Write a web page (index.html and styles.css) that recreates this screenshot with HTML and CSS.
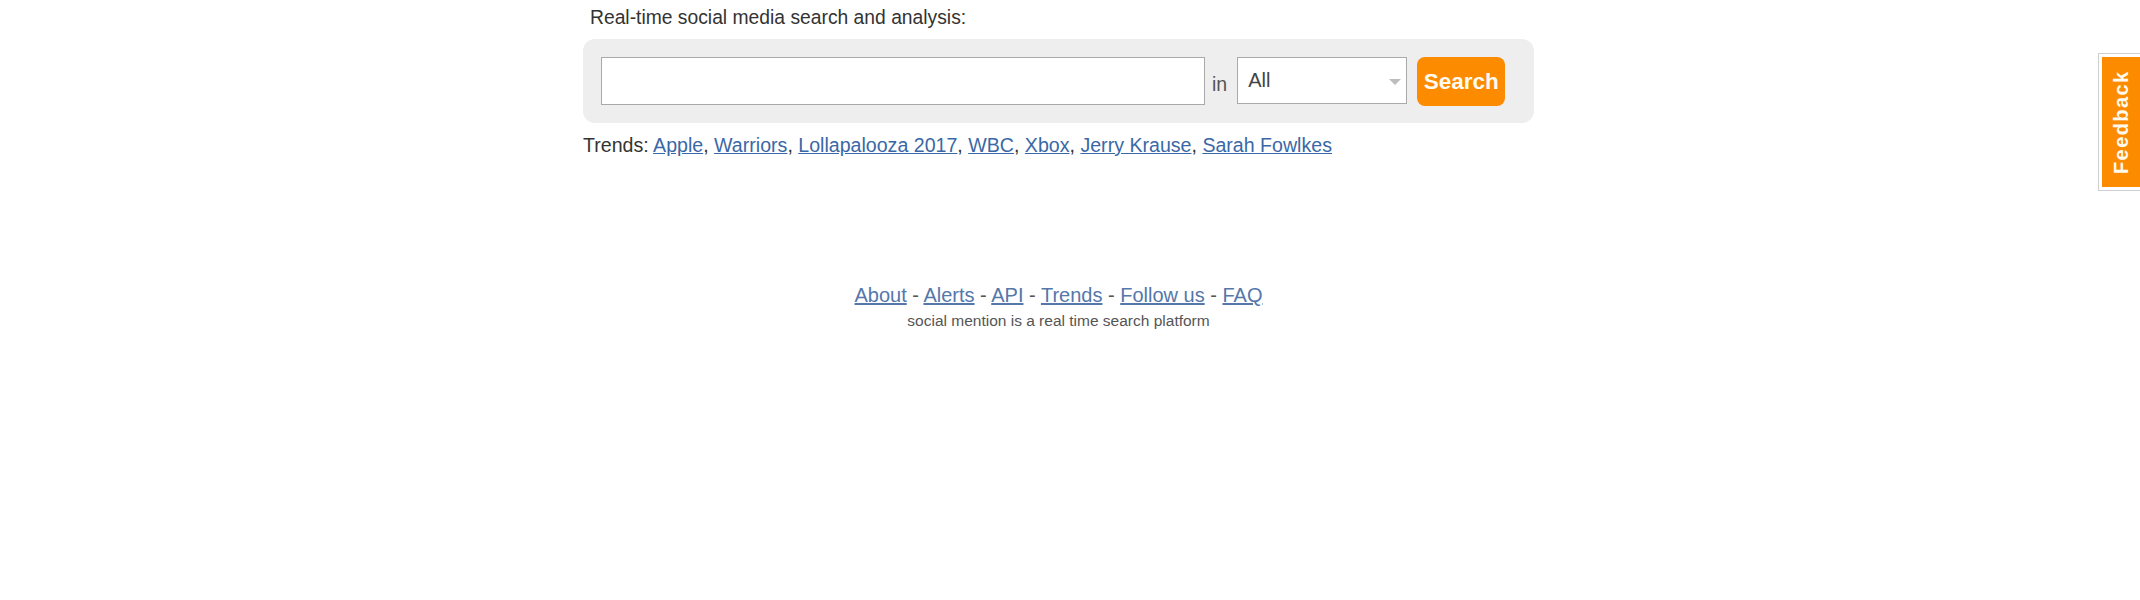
FILE: index.html
```html
<!doctype html>
<html lang="en">
 <head>
  <meta charset="UTF-8">
  <meta name="viewport" content="width=device-width, initial-scale=1.0">
  <title>Social Mention - Real Time Search</title>
  <link rel="stylesheet" href="styles.css">
 </head>
 <body>
  <div class="page">
   <div class="search">
    <p class="tagline">Real-time social media search and analysis:</p>
    <form class="searchbox" action="#">
     <input type="text" class="query" id="q">
     <span class="in">in</span>
     <div class="source">
      <span>All</span>
      <svg class="arrow" width="12" height="6" viewBox="0 0 12 6"><path d="M0 0h12L6 6z" fill="#bdbdbd"/></svg>
     </div>
     <button type="submit" class="go">Search</button>
    </form>
    <p class="trends">Trends: <a href="#">Apple</a>, <a href="#">Warriors</a>, <a href="#">Lollapalooza 2017</a>, <a href="#">WBC</a>, <a href="#">Xbox</a>, <a href="#">Jerry Krause</a>, <a href="#">Sarah Fowlkes</a></p>
   </div>

   <div class="footer">
    <p class="links"><a href="#">About</a> - <a href="#">Alerts</a> - <a href="#">API</a> - <a href="#">Trends</a> - <a href="#">Follow us</a> - <a href="#">FAQ</a></p>
    <p class="about">social mention is a real time search platform</p>
   </div>
  </div>

  <a class="feedback" href="#"><span>Feedback</span></a>
 </body>
</html>
```

FILE: styles.css
```css
body {
  margin: 0;
  background: #fff;
  font-family: "Liberation Sans", Arial, sans-serif;
  color: #333;
}
a {
  color: #3a68a6;
}
.page {
  padding-right: 23px; /* the original page had a scrollbar */
}
.search {
  width: 951px;
  margin: 0 auto;
}
.tagline {
  margin: 0;
  padding: 7px 0 0 7px;
  font-size: 19.3px;
  line-height: 22px;
}
.searchbox {
  display: flex;
  align-items: flex-start;
  margin: 10px 0 0;
  padding: 18px 18px 17px;
  background: #eeeeee;
  border-radius: 12px;
}
.query {
  box-sizing: border-box;
  width: 604px;
  height: 48px;
  margin: 0;
  padding: 0 8px;
  border: 1px solid #a9a9a9;
  background: #fff;
  font-family: inherit;
  font-size: 19px;
}
.in {
  padding: 16px 10px 0 7px;
  font-size: 19.5px;
  line-height: 22px;
  color: #555;
}
.source {
  box-sizing: border-box;
  display: flex;
  justify-content: space-between;
  width: 170px;
  height: 47px;
  padding: 11px 5px 0 10px;
  border: 1px solid #a9a9a9;
  background: #fff;
  font-size: 20px;
  line-height: 23px;
  color: #444;
}
.arrow {
  margin-top: 10px;
}
.go {
  width: 88px;
  height: 49px;
  margin-left: 10px;
  padding: 0;
  border: none;
  border-radius: 8px;
  background: #fd8b00;
  color: #fffaf0;
  font-family: inherit;
  font-size: 22.5px;
  font-weight: bold;
  cursor: pointer;
}
.trends {
  margin: 11px 0 0;
  font-size: 19.6px;
  line-height: 22px;
}
.footer {
  margin-top: 128px;
  text-align: center;
  color: #555;
}
.footer a {
  color: #5577aa;
}
.links {
  margin: 0;
  font-size: 20px;
  line-height: 23px;
}
.about {
  margin: 5px 0 0;
  font-size: 15.5px;
  line-height: 18px;
}
.feedback {
  position: fixed;
  top: 53px;
  right: 0;
  display: block;
  padding: 3px 0 3px 3px;
  background: #fff;
  border: 1px solid #cfcfcf;
  border-right: none;
  text-decoration: none;
}
.feedback span {
  display: flex;
  align-items: center;
  justify-content: center;
  width: 38px;
  height: 130px;
  background: #fd8b00;
  color: #fffaf0;
  font-size: 20px;
  font-weight: bold;
  letter-spacing: 1.4px;
  writing-mode: vertical-rl;
  transform: rotate(180deg);
}
```
